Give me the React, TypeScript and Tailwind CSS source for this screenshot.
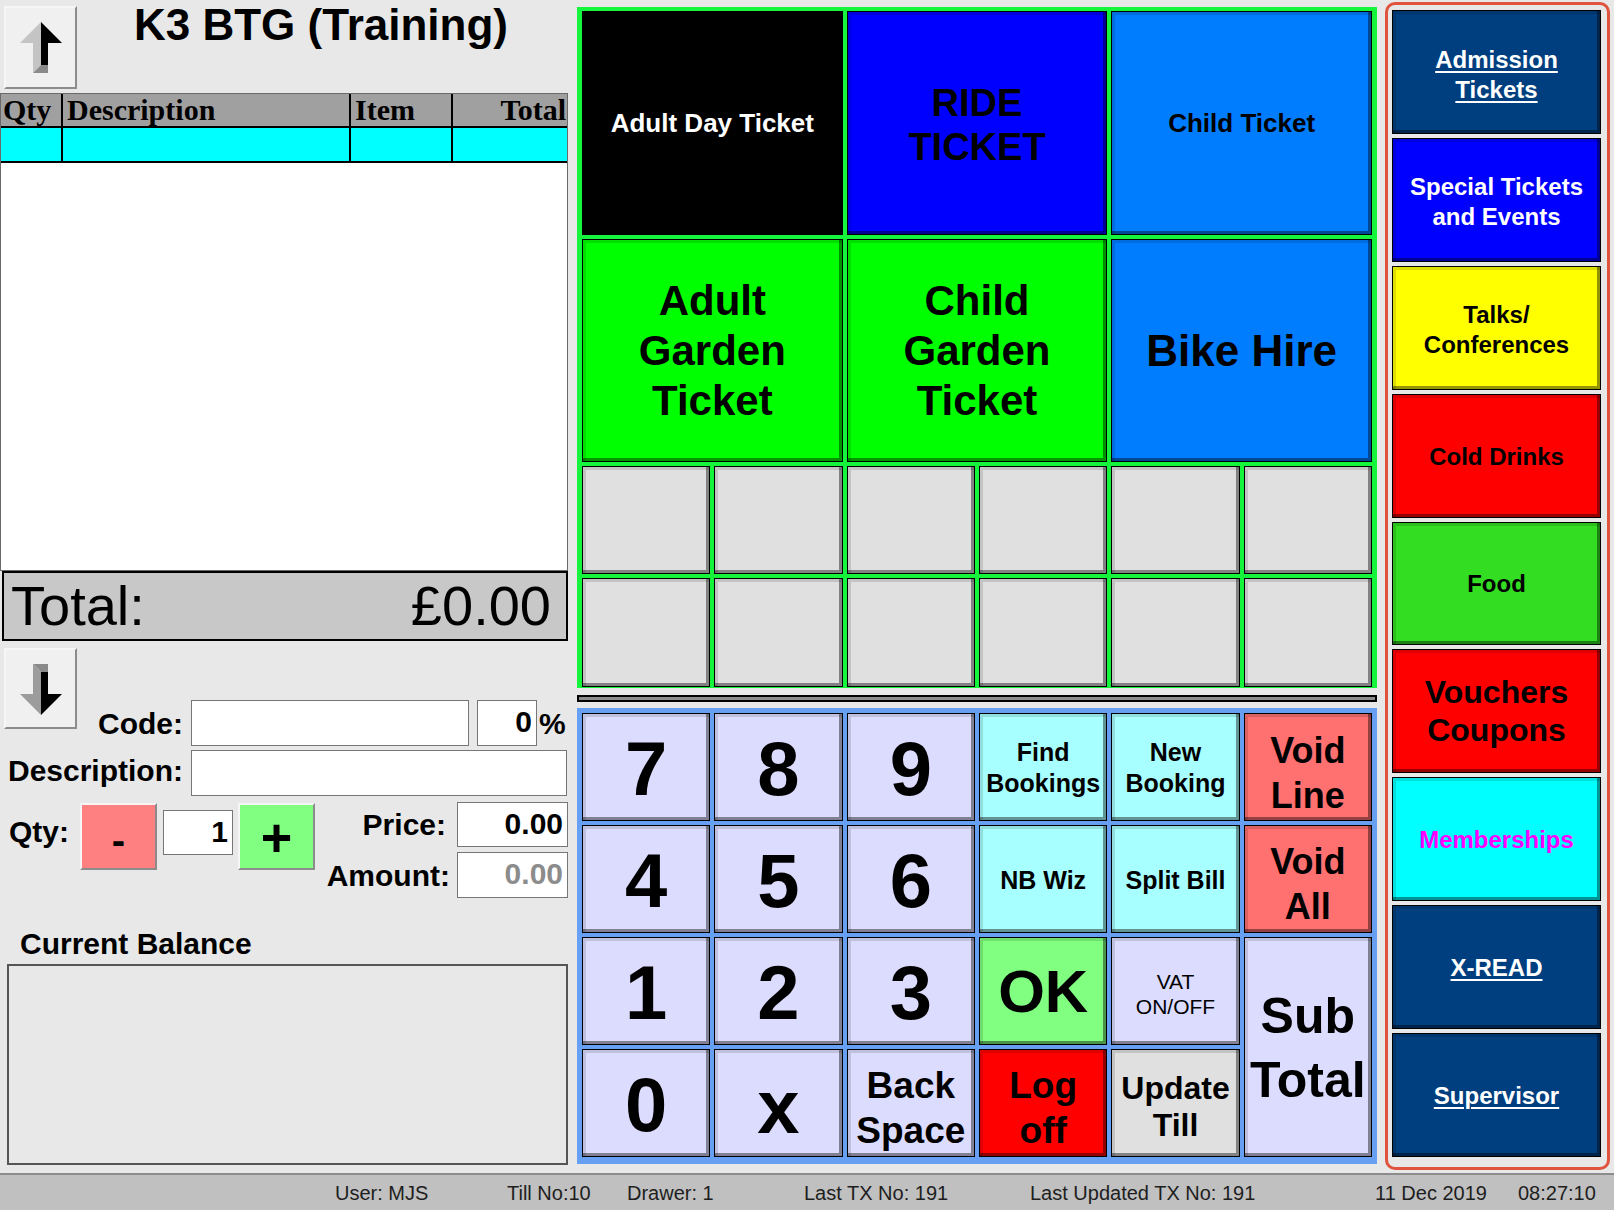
import React from "react";

const bevel =
  "border border-black shadow-[inset_3px_3px_0_rgba(0,0,0,0.13),inset_-3px_-3px_0_rgba(0,0,0,0.42)]";

const raised =
  "border-2 border-[#f6f6f6] border-r-[#8c8c8c] border-b-[#8c8c8c]";

function Btn({ className = "", children }: { className?: string; children?: React.ReactNode }) {
  return (
    <div className={`flex flex-col items-center justify-center text-center font-bold ${bevel} ${className}`}>
      {children}
    </div>
  );
}

function Arrow({ down }: { down?: boolean }) {
  return (
    <svg width="42" height="52" viewBox="0 0 42 52">
      <g transform={down ? "matrix(1 0 0 -1 0 52)" : undefined}>
        <polygon points="21,0 0,21 13,21 13,51 21,43" fill={down ? "#9c9c9c" : "#c4c4c4"} />
        <polygon points="21,0 42,21 28,21 28,43 21,43" fill="#000" />
        <polygon points="13,51 21,43 28,43 28,51" fill="#8a8a8a" />
      </g>
    </svg>
  );
}

function Input({ className = "", children }: { className?: string; children?: React.ReactNode }) {
  return (
    <div className={`bg-white border border-[#767676] text-right font-bold text-[30px] leading-[42px] pr-[4px] ${className}`}>
      {children}
    </div>
  );
}

function LeftColumn() {
  return (
    <div className="w-[568px] flex flex-col">
      {/* header + scroll up */}
      <div className="h-[93px] flex items-start">
        <div className={`ml-[4px] mt-[6px] w-[73px] h-[83px] bg-[#f0f0f0] flex items-center justify-center ${raised}`}>
          <Arrow />
        </div>
        <div className="ml-[57px] text-[44px] font-bold leading-[50px] whitespace-nowrap">
          K3 BTG (Training)
        </div>
      </div>

      {/* order lines */}
      <div className="h-[478px] border border-[#6a6a6a] bg-white flex flex-col font-['Liberation_Serif',serif]">
        <div className="h-[34px] bg-[#a0a0a0] border-b-2 border-black flex text-[30px] font-bold leading-[32px]">
          <div className="w-[62px] border-r-2 border-black pl-[2px]">Qty</div>
          <div className="w-[288px] border-r-2 border-black pl-[4px]">Description</div>
          <div className="w-[102px] border-r-2 border-black pl-[4px]">Item</div>
          <div className="flex-1 text-right pr-[1px]">Total</div>
        </div>
        <div className="h-[35px] bg-[#00ffff] border-b-2 border-black flex">
          <div className="w-[62px] border-r-2 border-black" />
          <div className="w-[288px] border-r-2 border-black" />
          <div className="w-[102px] border-r-2 border-black" />
          <div className="flex-1" />
        </div>
        <div className="flex-1" />
      </div>

      <div className="ml-[2px] w-[566px] h-[70px] border-2 border-black bg-[#c8c8c8] flex items-center justify-between pl-[7px] pr-[15px] text-[56px] leading-none">
        <span>Total:</span>
        <span>£0.00</span>
      </div>

      {/* code row */}
      <div className="mt-[7px] flex items-start">
        <div className={`ml-[4px] w-[73px] h-[81px] bg-[#f0f0f0] flex items-center justify-center ${raised}`}>
          <Arrow down />
        </div>
        <div className="mt-[52px] flex items-center">
          <div className="w-[106px] text-right text-[30px] font-bold">Code:</div>
          <Input className="ml-[8px] w-[278px] h-[46px]" />
          <Input className="ml-[8px] w-[60px] h-[46px] pr-[2px]">0</Input>
          <span className="ml-[2px] text-[30px] font-bold">%</span>
        </div>
      </div>

      <div className="mt-[4px] flex items-center">
        <div className="w-[183px] text-right text-[30px] font-bold leading-[40px] pb-[4px]">Description:</div>
        <Input className="ml-[8px] w-[376px] h-[46px]" />
      </div>

      {/* qty / price */}
      <div className="mt-[6px] flex items-start">
        <div className="ml-[9px] w-[71px] h-[58px] flex items-center text-[30px] font-bold">Qty:</div>
        <div className={`mt-[1px] w-[77px] h-[67px] bg-[#ff8080] flex items-center justify-center text-[40px] font-bold pt-[6px] ${raised}`}>
          -
        </div>
        <Input className="ml-[6px] mt-[8px] w-[70px] h-[45px]">1</Input>
        <div className={`ml-[5px] mt-[1px] w-[77px] h-[67px] bg-[#80ff80] flex items-center justify-center text-[54px] font-bold leading-none ${raised}`}>
          +
        </div>
        <div className="flex-1 flex flex-col items-end">
          <div className="flex items-center">
            <span className="text-[30px] font-bold">Price:</span>
            <Input className="ml-[11px] w-[111px] h-[45px]">0.00</Input>
          </div>
          <div className="mt-[5px] flex items-center">
            <span className="text-[30px] font-bold">Amount:</span>
            <Input className="ml-[7px] w-[111px] h-[46px] text-[#8c8c8c]">0.00</Input>
          </div>
        </div>
      </div>

      <div className="mt-[31px] ml-[20px] text-[30px] font-bold leading-[30px]">Current Balance</div>
      <div className="mt-[5px] ml-[7px] w-[561px] h-[201px] border-2 border-[#555555]" />
    </div>
  );
}

function Middle() {
  return (
    <div className="ml-[9px] w-[800px] flex flex-col">
      <div className="mt-[7px] h-[681px] bg-[#14f53c] pt-[4px] px-[5px] pb-[1px] grid grid-cols-6 grid-rows-[224px_223px_108px_109px] gap-[4px]">
        <Btn className="col-span-2 bg-black text-white text-[26px]">Adult Day Ticket</Btn>
        <Btn className="col-span-2 bg-[#0000ff] text-[38px] leading-[44px] pt-[4px]">
          <span>RIDE</span>
          <span>TICKET</span>
        </Btn>
        <Btn className="col-span-2 bg-[#007cff] text-[26px]">Child Ticket</Btn>
        <Btn className="col-span-2 bg-[#00ff00] text-[42px] leading-[50px]">
          <span>Adult</span>
          <span>Garden</span>
          <span>Ticket</span>
        </Btn>
        <Btn className="col-span-2 bg-[#00ff00] text-[42px] leading-[50px]">
          <span>Child</span>
          <span>Garden</span>
          <span>Ticket</span>
        </Btn>
        <Btn className="col-span-2 bg-[#007cff] text-[44px]">Bike Hire</Btn>
        {Array.from({ length: 12 }).map((_, i) => (
          <Btn key={i} className="bg-[#e0e0e0]" />
        ))}
      </div>

      <div className="mt-[7px] h-[7px] border-2 border-black bg-[#8c8c8c]" />

      <div className="mt-[6px] h-[456px] bg-[#67a0f2] pt-[5px] pb-[7px] px-[5px] grid grid-cols-6 grid-rows-4 gap-[4px]">
        <Btn className="bg-[#dcdcff] text-[76px] leading-none pt-[4px]">7</Btn>
        <Btn className="bg-[#dcdcff] text-[76px] leading-none pt-[4px]">8</Btn>
        <Btn className="bg-[#dcdcff] text-[76px] leading-none pt-[4px]">9</Btn>
        <Btn className="bg-[#a8ffff] text-[25px] leading-[31px] pt-[2px]">
          <span>Find</span>
          <span>Bookings</span>
        </Btn>
        <Btn className="bg-[#a8ffff] text-[25px] leading-[31px] pt-[2px]">
          <span>New</span>
          <span>Booking</span>
        </Btn>
        <Btn className="bg-[#ff7070] text-[36px] leading-[45px] pt-[12px]">
          <span>Void</span>
          <span>Line</span>
        </Btn>

        <Btn className="bg-[#dcdcff] text-[76px] leading-none pt-[4px]">4</Btn>
        <Btn className="bg-[#dcdcff] text-[76px] leading-none pt-[4px]">5</Btn>
        <Btn className="bg-[#dcdcff] text-[76px] leading-none pt-[4px]">6</Btn>
        <Btn className="bg-[#a8ffff] text-[25px] pt-[3px]">NB Wiz</Btn>
        <Btn className="bg-[#a8ffff] text-[25px] pt-[3px]">Split Bill</Btn>
        <Btn className="bg-[#ff7070] text-[36px] leading-[45px] pt-[10px]">
          <span>Void</span>
          <span>All</span>
        </Btn>

        <Btn className="bg-[#dcdcff] text-[76px] leading-none pt-[4px]">1</Btn>
        <Btn className="bg-[#dcdcff] text-[76px] leading-none pt-[4px]">2</Btn>
        <Btn className="bg-[#dcdcff] text-[76px] leading-none pt-[4px]">3</Btn>
        <Btn className="bg-[#80ff80] text-[60px] leading-none pt-[2px]">OK</Btn>
        <Btn className="bg-[#dcdcff] text-[21px] font-normal leading-[25px] pt-[6px]">
          <span>VAT</span>
          <span>ON/OFF</span>
        </Btn>
        <Btn className="row-span-2 bg-[#dcdcff] text-[50px] leading-[64px] pt-[2px]">
          <span>Sub</span>
          <span>Total</span>
        </Btn>

        <Btn className="bg-[#dcdcff] text-[76px] leading-none pt-[4px]">0</Btn>
        <Btn className="bg-[#dcdcff] text-[76px] leading-none pt-[8px]">x</Btn>
        <Btn className="bg-[#dcdcff] text-[37px] leading-[45px] pt-[9px]">
          <span>Back</span>
          <span>Space</span>
        </Btn>
        <Btn className="bg-[#ff0000] text-[37px] leading-[45px] pt-[9px]">
          <span>Log</span>
          <span>off</span>
        </Btn>
        <Btn className="bg-[#e0e0e0] text-[32px] leading-[37px] pt-[8px]">
          <span>Update</span>
          <span>Till</span>
        </Btn>
      </div>
    </div>
  );
}

function Sidebar() {
  const navy = "bg-[#003f7f] text-white underline decoration-2 underline-offset-[3px]";
  return (
    <div className="ml-[8px] mt-[2px] w-[225px] h-[1168px] border-[3px] border-[#e0543f] rounded-[10px] pt-[5px] pb-[10px] pl-[4px] pr-[6px] grid grid-rows-9 gap-[4px]">
      <Btn className={`text-[24px] leading-[30px] pt-[6px] ${navy}`}>
        <span>Admission</span>
        <span>Tickets</span>
      </Btn>
      <Btn className="bg-[#0000ff] text-white text-[24px] leading-[30px] pt-[4px]">
        <span>Special Tickets</span>
        <span>and Events</span>
      </Btn>
      <Btn className="bg-[#ffff00] text-[24px] leading-[30px] pt-[4px]">
        <span>Talks/</span>
        <span>Conferences</span>
      </Btn>
      <Btn className="bg-[#ff0000] text-[24px] pt-[2px]">Cold Drinks</Btn>
      <Btn className="bg-[#33dd22] text-[24px] pt-[2px]">Food</Btn>
      <Btn className="bg-[#ff0000] text-[32px] leading-[38px]">
        <span>Vouchers</span>
        <span>Coupons</span>
      </Btn>
      <Btn className="bg-[#00ffff] text-[#ff00ff] text-[24px] pt-[2px]">Memberships</Btn>
      <Btn className={`text-[24px] pt-[2px] ${navy}`}>X-READ</Btn>
      <Btn className={`text-[24px] pt-[2px] ${navy}`}>Supervisor</Btn>
    </div>
  );
}

function StatusBar() {
  return (
    <div className="h-[37px] bg-[#c0c0c0] border-t-2 border-[#8c8c8c] flex items-center text-[20px] text-[#1e1e1e] pl-[335px] whitespace-nowrap">
      <span className="w-[172px]">User: MJS</span>
      <span className="w-[120px]">Till No:10</span>
      <span className="w-[177px]">Drawer: 1</span>
      <span className="w-[226px]">Last TX No: 191</span>
      <span className="w-[345px]">Last Updated TX No: 191</span>
      <span className="w-[143px]">11 Dec 2019</span>
      <span>08:27:10</span>
    </div>
  );
}

export default function App() {
  return (
    <div className="w-[1614px] h-[1210px] bg-[#e8e8e8] font-['Liberation_Sans',Arial,sans-serif] text-black overflow-hidden flex flex-col">
      <div className="h-[1173px] flex">
        <LeftColumn />
        <Middle />
        <Sidebar />
      </div>
      <StatusBar />
    </div>
  );
}
